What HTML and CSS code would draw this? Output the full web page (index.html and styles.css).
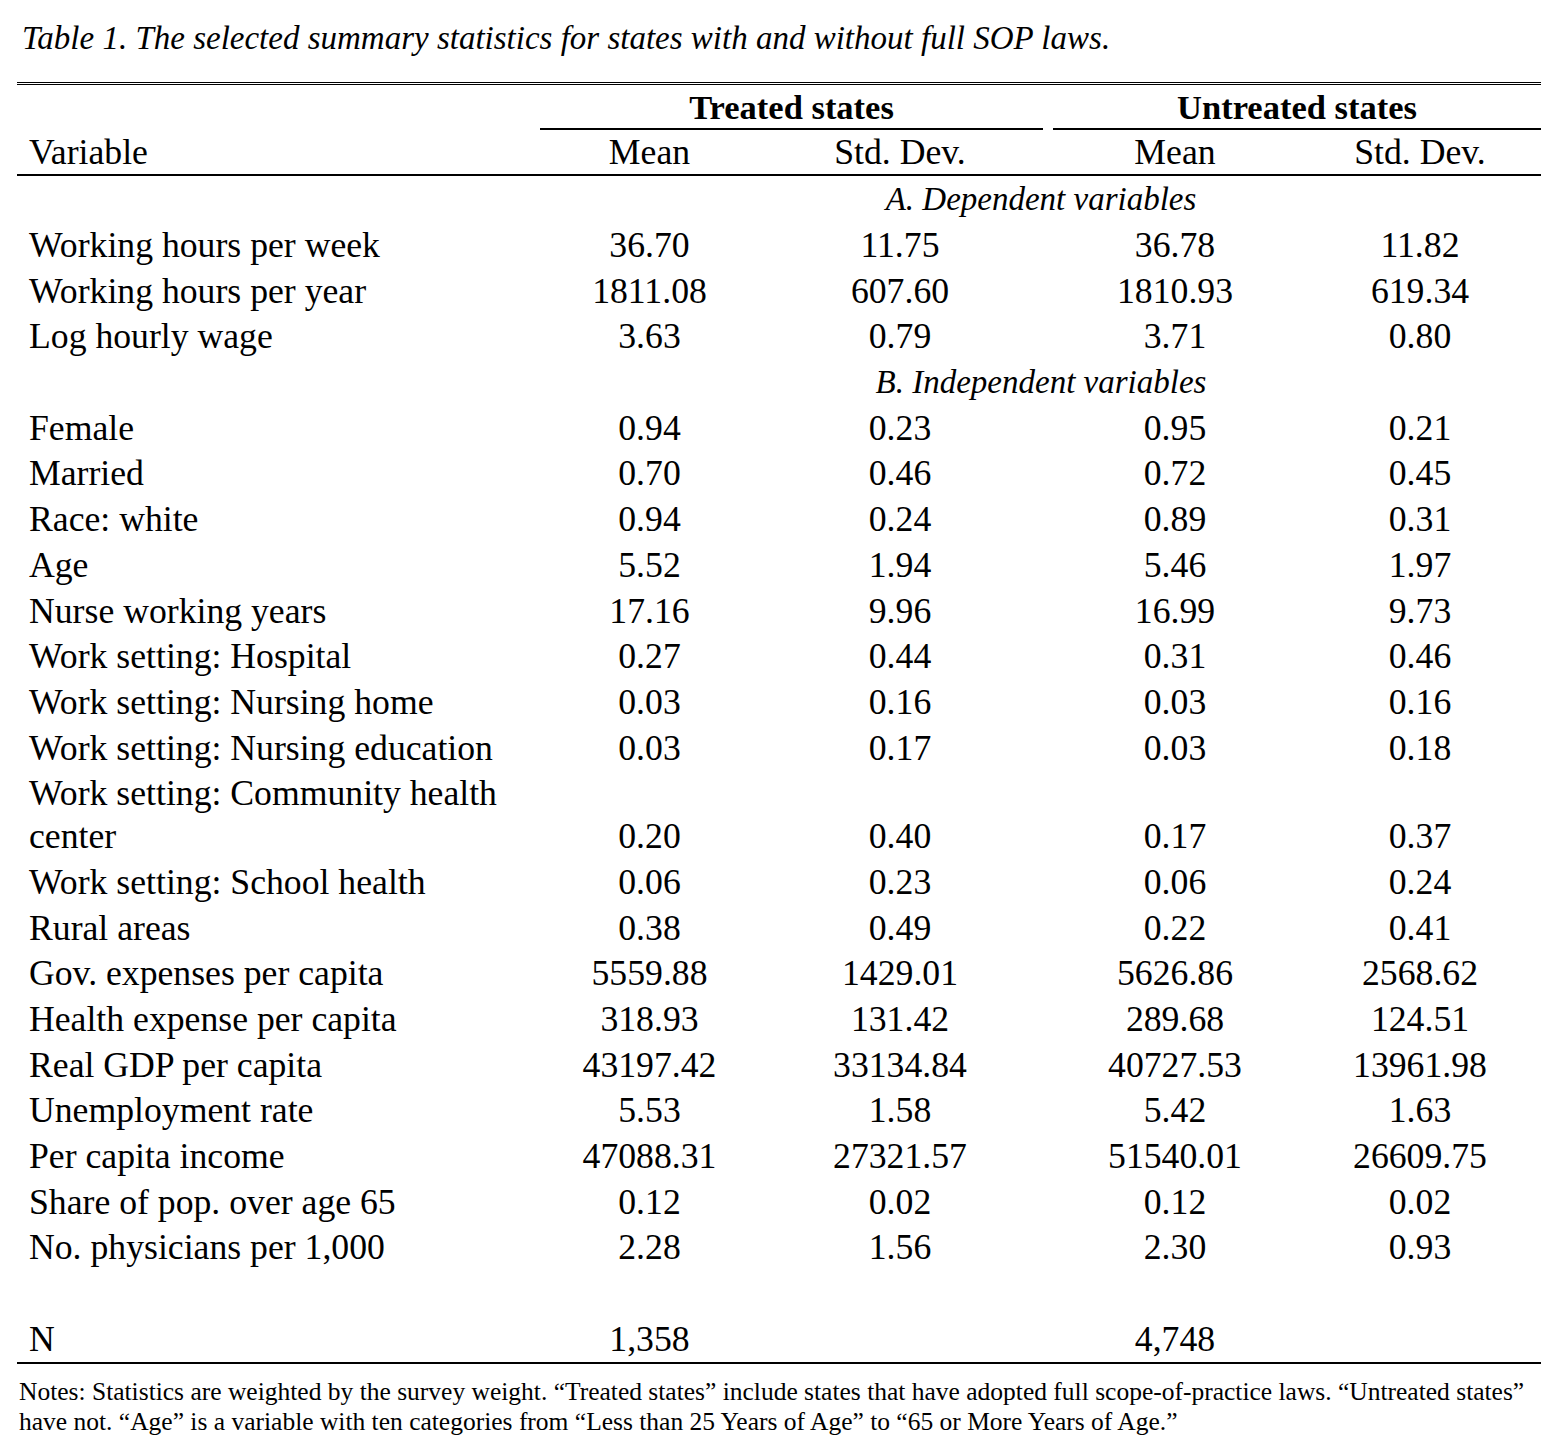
FILE: index.html
```html
<!DOCTYPE html>
<html lang="en">
<head>
<meta charset="utf-8">
<title>Table 1</title>
<link rel="stylesheet" href="styles.css">
</head>
<body>
<div class="page">
  <p class="caption">Table 1. The selected summary statistics for states with and without full SOP laws.</p>
  <div class="table">
    <div class="group-row">
      <div></div>
      <div class="group">Treated states</div>
      <div></div>
      <div class="group">Untreated states</div>
    </div>
    <div class="row head">
      <div class="var">Variable</div><div class="num">Mean</div><div class="num">Std. Dev.</div><div class="num c4">Mean</div><div class="num">Std. Dev.</div>
    </div>
    <div class="body">
      <div class="row panel"><div class="panel-title">A. Dependent variables</div></div>
      <div class="row"><div class="var">Working hours per week</div><div class="num">36.70</div><div class="num">11.75</div><div class="num c4">36.78</div><div class="num">11.82</div></div>
      <div class="row"><div class="var">Working hours per year</div><div class="num">1811.08</div><div class="num">607.60</div><div class="num c4">1810.93</div><div class="num">619.34</div></div>
      <div class="row"><div class="var">Log hourly wage</div><div class="num">3.63</div><div class="num">0.79</div><div class="num c4">3.71</div><div class="num">0.80</div></div>
      <div class="row panel"><div class="panel-title">B. Independent variables</div></div>
      <div class="row"><div class="var">Female</div><div class="num">0.94</div><div class="num">0.23</div><div class="num c4">0.95</div><div class="num">0.21</div></div>
      <div class="row"><div class="var">Married</div><div class="num">0.70</div><div class="num">0.46</div><div class="num c4">0.72</div><div class="num">0.45</div></div>
      <div class="row"><div class="var">Race: white</div><div class="num">0.94</div><div class="num">0.24</div><div class="num c4">0.89</div><div class="num">0.31</div></div>
      <div class="row"><div class="var">Age</div><div class="num">5.52</div><div class="num">1.94</div><div class="num c4">5.46</div><div class="num">1.97</div></div>
      <div class="row"><div class="var">Nurse working years</div><div class="num">17.16</div><div class="num">9.96</div><div class="num c4">16.99</div><div class="num">9.73</div></div>
      <div class="row"><div class="var">Work setting: Hospital</div><div class="num">0.27</div><div class="num">0.44</div><div class="num c4">0.31</div><div class="num">0.46</div></div>
      <div class="row"><div class="var">Work setting: Nursing home</div><div class="num">0.03</div><div class="num">0.16</div><div class="num c4">0.03</div><div class="num">0.16</div></div>
      <div class="row"><div class="var">Work setting: Nursing education</div><div class="num">0.03</div><div class="num">0.17</div><div class="num c4">0.03</div><div class="num">0.18</div></div>
      <div class="row tall"><div class="var">Work setting: Community health<br>center</div><div class="num">0.20</div><div class="num">0.40</div><div class="num c4">0.17</div><div class="num">0.37</div></div>
      <div class="row"><div class="var">Work setting: School health</div><div class="num">0.06</div><div class="num">0.23</div><div class="num c4">0.06</div><div class="num">0.24</div></div>
      <div class="row"><div class="var">Rural areas</div><div class="num">0.38</div><div class="num">0.49</div><div class="num c4">0.22</div><div class="num">0.41</div></div>
      <div class="row"><div class="var">Gov. expenses per capita</div><div class="num">5559.88</div><div class="num">1429.01</div><div class="num c4">5626.86</div><div class="num">2568.62</div></div>
      <div class="row"><div class="var">Health expense per capita</div><div class="num">318.93</div><div class="num">131.42</div><div class="num c4">289.68</div><div class="num">124.51</div></div>
      <div class="row"><div class="var">Real GDP per capita</div><div class="num">43197.42</div><div class="num">33134.84</div><div class="num c4">40727.53</div><div class="num">13961.98</div></div>
      <div class="row"><div class="var">Unemployment rate</div><div class="num">5.53</div><div class="num">1.58</div><div class="num c4">5.42</div><div class="num">1.63</div></div>
      <div class="row"><div class="var">Per capita income</div><div class="num">47088.31</div><div class="num">27321.57</div><div class="num c4">51540.01</div><div class="num">26609.75</div></div>
      <div class="row"><div class="var">Share of pop. over age 65</div><div class="num">0.12</div><div class="num">0.02</div><div class="num c4">0.12</div><div class="num">0.02</div></div>
      <div class="row"><div class="var">No. physicians per 1,000</div><div class="num">2.28</div><div class="num">1.56</div><div class="num c4">2.30</div><div class="num">0.93</div></div>
      <div class="row"><div class="var">&nbsp;</div><div class="num"></div><div class="num"></div><div class="num c4"></div><div class="num"></div></div>
      <div class="row last"><div class="var">N</div><div class="num">1,358</div><div class="num"></div><div class="num c4">4,748</div><div class="num"></div></div>
    </div>
  </div>
  <p class="notes">Notes: Statistics are weighted by the survey weight. “Treated states” include states that have adopted full scope-of-practice laws. “Untreated states”<br>have not. “Age” is a variable with ten categories from “Less than 25 Years of Age” to “65 or More Years of Age.”</p>
</div>
</body>
</html>
```

FILE: styles.css
```css
html, body {
  margin: 0;
  padding: 0;
  background: #ffffff;
}

body {
  font-family: "Liberation Serif", "Times New Roman", serif;
  color: #000000;
}

.page {
  width: 1524px;
  padding: 18px 0 0 17px;
}

.caption {
  margin: 0 0 24px 5px;
  font-style: italic;
  font-size: 33px;
  line-height: 40px;
}

.table {
  border-top: 3px double #000000;
}

.group-row {
  display: grid;
  grid-template-columns: 523px 503px 10px 488px;
  padding-top: 1px;
}

.group {
  font-weight: bold;
  font-size: 34.5px;
  line-height: 42px;
  text-align: center;
  border-bottom: 2px solid #000000;
}

.row {
  display: grid;
  grid-template-columns: 507px 251px 250px 274px 242px;
  font-size: 35.7px;
  line-height: 43px;
  padding: 1.35px 0;
  align-items: end;
}

.row.head {
  padding: 1px 0 0;
  height: 43px;
  border-bottom: 2px solid #000000;
}

.body {
  padding-top: 1px;
}

.var {
  padding-left: 12px;
  white-space: nowrap;
}

.num {
  text-align: center;
  white-space: nowrap;
}

.num.c4 {
  padding-left: 26px;
}

.panel-title {
  grid-column: 2 / -1;
  padding-left: 17px;
  text-align: center;
  font-style: italic;
  font-size: 33px;
}

.row.last {
  border-bottom: 2px solid #000000;
}

.notes {
  margin: 13px 0 0 2px;
  font-size: 25.5px;
  line-height: 30px;
  white-space: nowrap;
}
```
